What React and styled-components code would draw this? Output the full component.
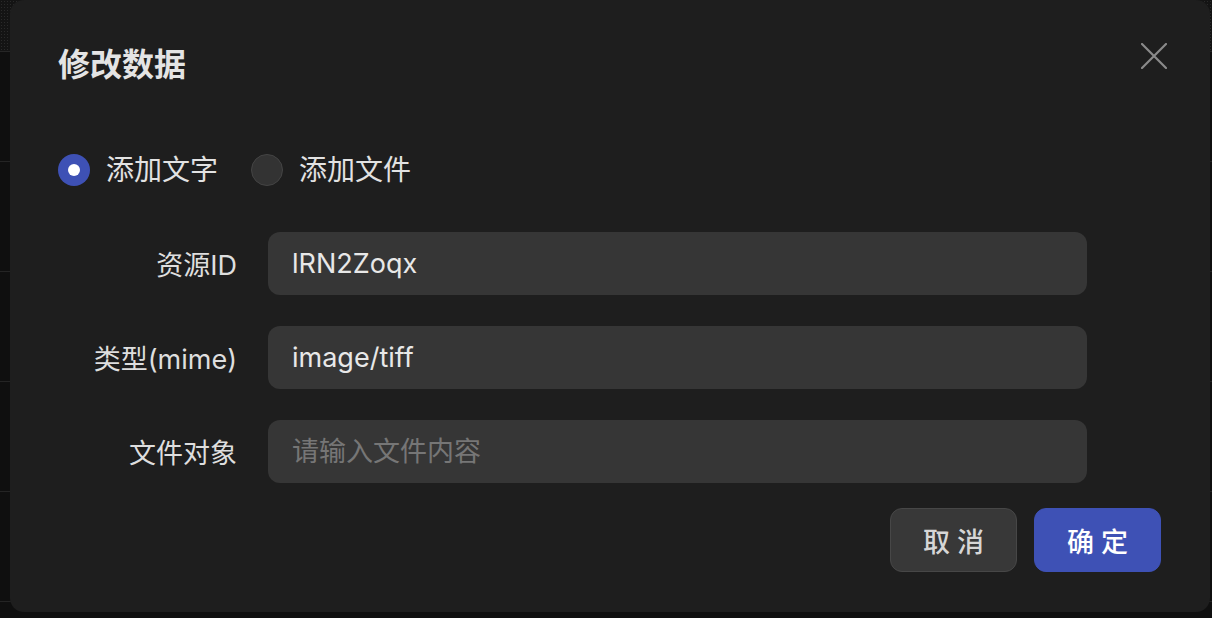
import React, { useState } from 'react'
import styled, { createGlobalStyle } from 'styled-components'

const GlobalStyle = createGlobalStyle`
    html, body {
        margin: 0;
        padding: 0;
        background: #0f0f0f;
        font-family: "Inter", "Noto Sans CJK SC", sans-serif;
        -webkit-font-smoothing: antialiased;
    }
    * { box-sizing: border-box; }
`

const rows = [0, 1, 2, 3, 4]

export default function App() {
    const [mode, setMode] = useState('text')

    return (
        <>
            <GlobalStyle />
            <Page>
                <PageHeader />
                {rows.map(r => <PageRow key={r} />)}
            </Page>
            <Overlay>
                <Dialog>
                    <Close aria-label="close">
                        <svg width="26" height="26" viewBox="0 0 26 26" fill="none">
                            <path d="M1 1L25 25M25 1L1 25" stroke="#8a8a8a" strokeWidth="2.2" strokeLinecap="round" />
                        </svg>
                    </Close>
                    <Title>修改数据</Title>

                    <RadioGroup>
                        <RadioItem onClick={() => setMode('text')}>
                            <RadioDot checked={mode === 'text'} />
                            添加文字
                        </RadioItem>
                        <RadioItem onClick={() => setMode('file')}>
                            <RadioDot checked={mode === 'file'} />
                            添加文件
                        </RadioItem>
                    </RadioGroup>

                    <Form>
                        <Label>资源ID</Label>
                        <Input defaultValue="lRN2Zoqx" />
                        <Label>类型(mime)</Label>
                        <Input defaultValue="image/tiff" />
                        <Label>文件对象</Label>
                        <Input placeholder="请输入文件内容" />
                    </Form>

                    <Footer>
                        <Button>取 消</Button>
                        <Button primary>确 定</Button>
                    </Footer>
                </Dialog>
            </Overlay>
        </>
    )
}

const Page = styled.div`
    width: 100%;
    height: 618px;
    overflow: hidden;
`

const PageHeader = styled.div`
    height: 52px;
    border-bottom: 1px solid #262626;
    background-color: #141414;
    background-image: radial-gradient(#2a2a2a 0.8px, transparent 0.8px);
    background-size: 3px 3px;
`

const PageRow = styled.div`
    height: 110px;
    border-bottom: 1px solid #242424;
`

const Overlay = styled.div`
    position: fixed;
    inset: 0;
    padding: 0 2px 6px 10px;
    display: flex;
    align-items: flex-start;
`

const Dialog = styled.div`
    position: relative;
    width: 1200px;
    height: 612px;
    background: #1e1e1e;
    border-radius: 14px;
    padding: 45px 48px 0 48px;
    display: flex;
    flex-direction: column;
`

const Close = styled.button`
    position: absolute;
    top: 43px;
    right: 43px;
    width: 26px;
    height: 26px;
    padding: 0;
    border: none;
    background: none;
    cursor: pointer;
    display: flex;
`

const Title = styled.h2`
    margin: 0;
    height: 40px;
    line-height: 40px;
    font-size: 32px;
    font-weight: 700;
    color: #e4e4e4;
`

const RadioGroup = styled.div`
    margin-top: 65px;
    height: 40px;
    display: flex;
    align-items: center;
    gap: 33px;
`

const RadioItem = styled.label`
    display: flex;
    align-items: center;
    gap: 16px;
    font-size: 28px;
    line-height: 36px;
    color: #e2e2e2;
    cursor: pointer;
`

const RadioDot = styled.span`
    width: 32px;
    height: 32px;
    border-radius: 50%;
    display: flex;
    align-items: center;
    justify-content: center;
    background: ${p => (p.checked ? '#3e51b5' : '#333333')};
    border: ${p => (p.checked ? 'none' : '1px solid #444444')};

    &::after {
        content: "";
        width: 12px;
        height: 12px;
        border-radius: 50%;
        background: #ffffff;
        display: ${p => (p.checked ? 'block' : 'none')};
    }
`

const Form = styled.div`
    margin-top: 42px;
    display: grid;
    grid-template-columns: 179px 819px;
    column-gap: 31px;
    row-gap: 31px;
    align-items: center;
`

const Label = styled.div`
    text-align: right;
    font-size: 27px;
    color: #dedede;
`

const Input = styled.input`
    height: 63px;
    border: none;
    outline: none;
    border-radius: 12px;
    background: #363636;
    padding: 0 24px;
    font-family: "Inter", "Noto Sans CJK SC", sans-serif;
    font-size: 27px;
    color: #e8e8e8;

    &::placeholder {
        color: #767676;
    }
`

const Footer = styled.div`
    margin-top: 25px;
    display: flex;
    justify-content: flex-end;
    gap: 17px;
    padding-right: 1px;
`

const Button = styled.button`
    width: 127px;
    height: 64px;
    border-radius: 12px;
    font-family: "Inter", "Noto Sans CJK SC", sans-serif;
    font-size: 27px;
    font-weight: 500;
    cursor: pointer;
    background: ${p => (p.primary ? '#3e51b5' : '#383838')};
    color: ${p => (p.primary ? '#ffffff' : '#d6d6d6')};
    border: 1px solid ${p => (p.primary ? '#3e51b5' : '#474747')};
`
